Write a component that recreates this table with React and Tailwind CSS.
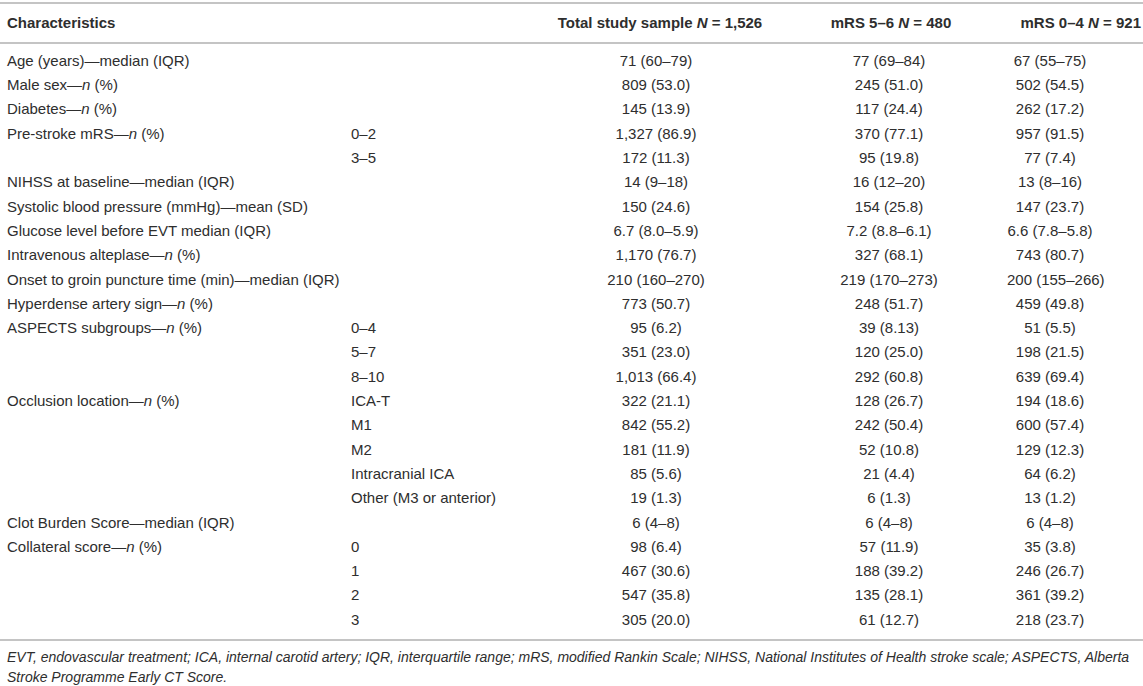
const rows = [
  ["Age (years)", "median (IQR)", "", "71 (60–79)", "77 (69–84)", "67 (55–75)"],
  ["Male sex", "n", "", "809 (53.0)", "245 (51.0)", "502 (54.5)"],
  ["Diabetes", "n", "", "145 (13.9)", "117 (24.4)", "262 (17.2)"],
  ["Pre-stroke mRS", "n", "0–2", "1,327 (86.9)", "370 (77.1)", "957 (91.5)"],
  ["", "", "3–5", "172 (11.3)", "95 (19.8)", "77 (7.4)"],
  ["NIHSS at baseline", "median (IQR)", "", "14 (9–18)", "16 (12–20)", "13 (8–16)"],
  ["Systolic blood pressure (mmHg)", "mean (SD)", "", "150 (24.6)", "154 (25.8)", "147 (23.7)"],
  ["Glucose level before EVT median (IQR)", "", "", "6.7 (8.0–5.9)", "7.2 (8.8–6.1)", "6.6 (7.8–5.8)"],
  ["Intravenous alteplase", "n", "", "1,170 (76.7)", "327 (68.1)", "743 (80.7)"],
  ["Onset to groin puncture time (min)", "median (IQR)", "", "210 (160–270)", "219 (170–273)", "200 (155–266)"],
  ["Hyperdense artery sign", "n", "", "773 (50.7)", "248 (51.7)", "459 (49.8)"],
  ["ASPECTS subgroups", "n", "0–4", "95 (6.2)", "39 (8.13)", "51 (5.5)"],
  ["", "", "5–7", "351 (23.0)", "120 (25.0)", "198 (21.5)"],
  ["", "", "8–10", "1,013 (66.4)", "292 (60.8)", "639 (69.4)"],
  ["Occlusion location", "n", "ICA-T", "322 (21.1)", "128 (26.7)", "194 (18.6)"],
  ["", "", "M1", "842 (55.2)", "242 (50.4)", "600 (57.4)"],
  ["", "", "M2", "181 (11.9)", "52 (10.8)", "129 (12.3)"],
  ["", "", "Intracranial ICA", "85 (5.6)", "21 (4.4)", "64 (6.2)"],
  ["", "", "Other (M3 or anterior)", "19 (1.3)", "6 (1.3)", "13 (1.2)"],
  ["Clot Burden Score", "median (IQR)", "", "6 (4–8)", "6 (4–8)", "6 (4–8)"],
  ["Collateral score", "n", "0", "98 (6.4)", "57 (11.9)", "35 (3.8)"],
  ["", "", "1", "467 (30.6)", "188 (39.2)", "246 (26.7)"],
  ["", "", "2", "547 (35.8)", "135 (28.1)", "361 (39.2)"],
  ["", "", "3", "305 (20.0)", "61 (12.7)", "218 (23.7)"],
];

const Label = ({ name, stat }) => {
  if (!stat) return <>{name}</>;
  if (stat === "n")
    return (
      <>
        {name}—<i>n</i> (%)
      </>
    );
  return (
    <>
      {name}—{stat}
    </>
  );
};

const grid = "grid grid-cols-[351px_190px_230px_236px_86px_50px]";

export default function App() {
  return (
    <div className="w-[1143px] bg-white text-[15px] text-[#2e2e2e] font-['Liberation_Sans',Arial,sans-serif]">
      <div className="mt-[2px] border-t-2 border-[#c4c4c4]" />
      <div className={`${grid} h-[38px] items-center font-bold`}>
        <div className="pl-[7px]">Characteristics</div>
        <div />
        <div className="text-center pl-2 whitespace-nowrap">
          Total study sample <i>N</i> = 1,526
        </div>
        <div className="text-center pl-1 whitespace-nowrap">
          mRS 5–6 <i>N</i> = 480
        </div>
        <div className="col-span-2 text-right pr-[2px] whitespace-nowrap">
          mRS 0–4 <i>N</i> = 921
        </div>
      </div>
      <div className="border-t-2 border-[#c4c4c4]" />
      <div className="pt-[5px] pb-[7px]">
        {rows.map((r, i) => (
          <div key={i} className={`${grid} h-[24.3px] items-center whitespace-nowrap`}>
            <div className="pl-[7px]">
              <Label name={r[0]} stat={r[1]} />
            </div>
            <div>{r[2]}</div>
            <div className="text-center">{r[3]}</div>
            <div className="text-center">{r[4]}</div>
            <div className="text-center">{r[5]}</div>
            <div />
          </div>
        ))}
      </div>
      <div className="border-t-2 border-[#c4c4c4]" />
      <p className="pt-[6px] pl-[7px] text-[14px] italic leading-[20px] whitespace-nowrap">
        EVT, endovascular treatment; ICA, internal carotid artery; IQR, interquartile range; mRS, modified Rankin Scale; NIHSS,
        National Institutes of Health stroke scale; ASPECTS, Alberta
        <br />
        Stroke Programme Early CT Score.
      </p>
    </div>
  );
}
